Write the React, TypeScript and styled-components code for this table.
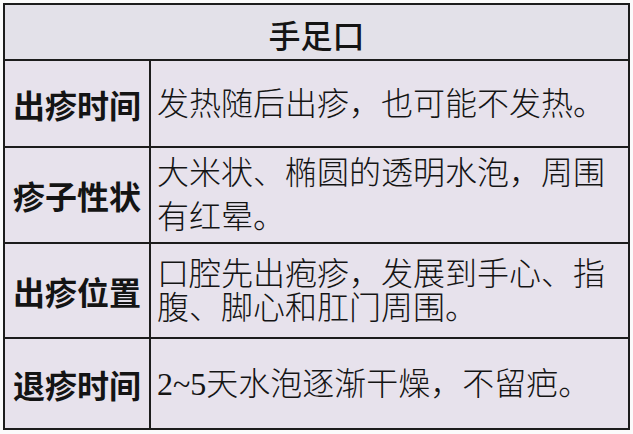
import { Fragment } from 'react'
import styled, { createGlobalStyle } from 'styled-components'

interface SymptomRow {
  label: string
  lines: string[]
  lineHeight: number
}

const rows: SymptomRow[] = [
  { label: '出疹时间', lines: ['发热随后出疹，也可能不发热。'], lineHeight: 40 },
  { label: '疹子性状', lines: ['大米状、椭圆的透明水泡，周围', '有红晕。'], lineHeight: 44 },
  { label: '出疹位置', lines: ['口腔先出疱疹，发展到手心、指', '腹、脚心和肛门周围。'], lineHeight: 34 },
  { label: '退疹时间', lines: ['2~5天水泡逐渐干燥，不留疤。'], lineHeight: 40 },
]

const GlobalStyle = createGlobalStyle`
  html, body {
    margin: 0;
    padding: 0;
    background: #fbfbfb;
  }
  body {
    font-family: "Liberation Serif", "Noto Sans CJK SC", serif;
    color: #141414;
  }
`

const Page = styled.div`
  width: 633px;
  height: 434px;
  padding: 3px 0 0 3px;
  box-sizing: border-box;
`

const Sheet = styled.div`
  display: grid;
  grid-template-columns: 146px 479px;
  grid-template-rows: 56px 87px 96px 95px 91px;
  border-top: 2px solid #1c1c1c;
  border-left: 2px solid #1c1c1c;
  width: max-content;
`

const Cell = styled.div`
  box-sizing: border-box;
  border-right: 2px solid #1c1c1c;
  border-bottom: 2px solid #1c1c1c;
  background: #e7e2ec;
  display: flex;
  align-items: center;
`

const Title = styled(Cell)`
  grid-column: 1 / span 2;
  justify-content: center;
  background: #e3e1e9;
  font-family: "Noto Sans CJK SC", sans-serif;
  font-size: 32px;
  font-weight: 500;
  line-height: 1;
  padding-top: 4px;
`

const Label = styled(Cell)`
  justify-content: center;
  font-family: "Noto Sans CJK SC", sans-serif;
  font-size: 32px;
  font-weight: 600;
  line-height: 1;
`

const Detail = styled(Cell)<{ $lineHeight: number }>`
  flex-direction: column;
  align-items: flex-start;
  justify-content: center;
  padding-left: 6px;
  font-size: 32px;
  font-weight: 300;
  line-height: ${({ $lineHeight }) => $lineHeight}px;
  white-space: nowrap;
`

const Line = styled.span`
  display: block;
`

export default function App() {
  return (
    <>
      <GlobalStyle />
      <Page>
        <Sheet>
          <Title>手足口</Title>
          {rows.map((row) => (
            <Fragment key={row.label}>
              <Label>{row.label}</Label>
              <Detail $lineHeight={row.lineHeight}>
                {row.lines.map((line) => (
                  <Line key={line}>{line}</Line>
                ))}
              </Detail>
            </Fragment>
          ))}
        </Sheet>
      </Page>
    </>
  )
}
